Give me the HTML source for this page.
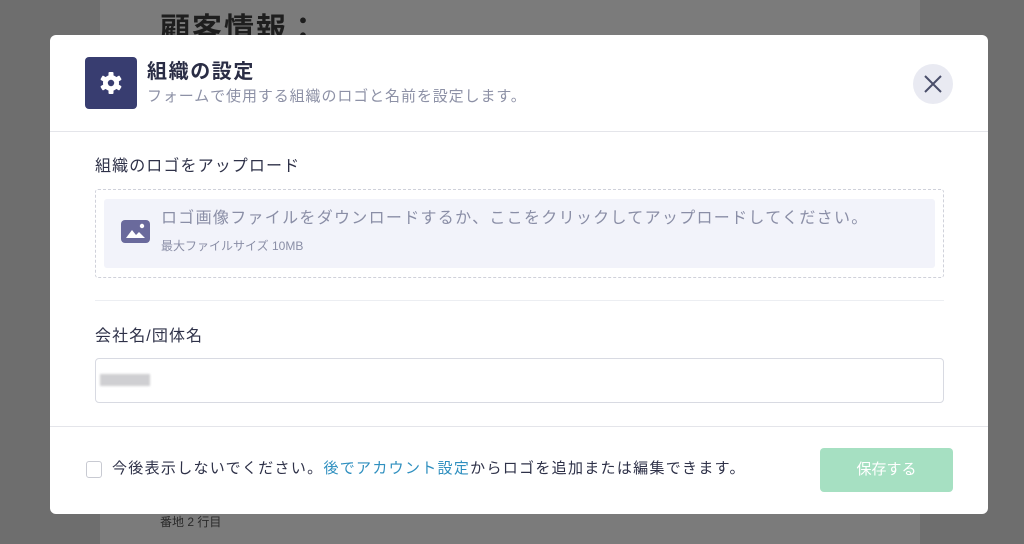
<!DOCTYPE html>
<html><head><meta charset="utf-8"><style>
*{margin:0;padding:0;box-sizing:border-box}
body{width:1024px;height:544px;background:#6e6e6e;position:relative;overflow:hidden;font-family:"Liberation Sans","Noto Sans CJK JP",sans-serif}
.a{position:absolute;white-space:nowrap}
</style></head><body>
<div class="a" style="left:100px;top:0;width:820px;height:544px;background:#7b7b7b"></div>
<div class="a" style="left:160px;top:10px;font-size:30px;font-weight:bold;color:#1e1e1e;line-height:40px;letter-spacing:2px">顧客情報：</div>
<div class="a" style="left:160px;top:513px;font-size:12px;color:#2a2a2a">番地 2 行目</div>
<div class="a" style="left:50px;top:35px;width:938px;height:479px;background:#fff;border-radius:6px">
 <div class="a" style="left:35px;top:22px;width:52px;height:52px;background:#383d70;border-radius:4px">
  <svg width="52" height="52" viewBox="0 0 52 52"><g fill="#fff" transform="translate(26 26)">
  <circle r="8"/><rect x="-2.5" y="-11" width="5" height="22" rx="1"/><rect x="-2.5" y="-11" width="5" height="22" rx="1" transform="rotate(60)"/><rect x="-2.5" y="-11" width="5" height="22" rx="1" transform="rotate(120)"/></g><circle cx="26" cy="26" r="3.2" fill="#383d70"/></svg>
 </div>
 <div class="a" style="left:97px;top:24px;font-size:20px;font-weight:bold;color:#2a2d45;line-height:26px;letter-spacing:1.6px">組織の設定</div>
 <div class="a" style="left:97px;top:52px;font-size:15px;color:#8d91a6;line-height:20px;letter-spacing:0.9px">フォームで使用する組織のロゴと名前を設定します。</div>
 <div class="a" style="left:863px;top:29px;width:40px;height:40px;border-radius:50%;background:#e9eaf2">
  <svg width="40" height="40"><path d="M12 12L28 28M28 12L12 28" stroke="#4a4e6a" stroke-width="2"/></svg></div>
 <div class="a" style="left:0;top:96px;width:938px;height:1px;background:#e4e5ea"></div>
 <div class="a" style="left:45px;top:121px;font-size:16px;color:#2e3148;line-height:22px;letter-spacing:1.1px">組織のロゴをアップロード</div>
 <div class="a" style="left:45px;top:154px;width:849px;height:89px;border:1px dashed #cfd1da;border-radius:3px"></div>
 <div class="a" style="left:54px;top:164px;width:831px;height:69px;background:#f2f3fa;border-radius:3px"></div>
 <div class="a" style="left:71px;top:185px;width:29px;height:23px;background:#6a6a9c;border-radius:4px">
  <svg width="29" height="23"><path d="M5 18L11 10L15 15L18 12L24 18Z" fill="#fff"/><circle cx="21" cy="6" r="2.2" fill="#fff"/></svg></div>
 <div class="a" style="left:111px;top:173px;font-size:16px;color:#8a8ea6;line-height:22px;letter-spacing:1.3px">ロゴ画像ファイルをダウンロードするか、ここをクリックしてアップロードしてください。</div>
 <div class="a" style="left:111px;top:203px;font-size:12px;color:#8a8ea6;line-height:16px">最大ファイルサイズ 10MB</div>
 <div class="a" style="left:45px;top:265px;width:849px;height:1px;background:#eceef2"></div>
 <div class="a" style="left:45px;top:291px;font-size:16px;color:#2e3148;line-height:22px;letter-spacing:1.1px">会社名/団体名</div>
 <div class="a" style="left:45px;top:323px;width:849px;height:45px;border:1px solid #d8dae2;border-radius:4px"></div>
 <div class="a" style="left:50px;top:339px;width:50px;height:12px;background:#cfcfd2;filter:blur(1px)"></div>
 <div class="a" style="left:0;top:391px;width:938px;height:1px;background:#e4e5ea"></div>
 <div class="a" style="left:36px;top:426px;width:16px;height:17px;border:1px solid #c8cad2;border-radius:3px"></div>
 <div class="a" style="left:62px;top:424px;font-size:15px;color:#2e3148;line-height:20px;letter-spacing:1.3px">今後表示しないでください。<span style="color:#2f8fbf">後でアカウント設定</span>からロゴを追加または編集できます。</div>
 <div class="a" style="left:770px;top:413px;width:133px;height:44px;background:#a6e0c2;border-radius:4px;color:#fff;font-size:15px;text-align:center;line-height:44px">保存する</div>
</div>
</body></html>
